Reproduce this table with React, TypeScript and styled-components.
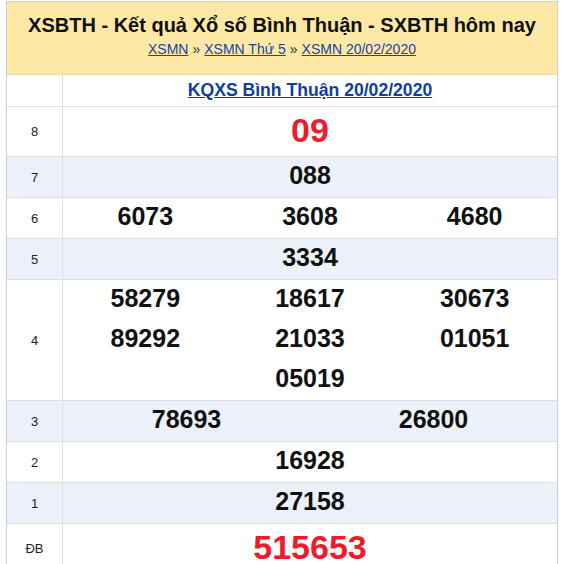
import React from 'react';
import styled, { createGlobalStyle } from 'styled-components';

const GlobalStyle = createGlobalStyle`
  html, body {
    margin: 0;
    padding: 0;
    background: #fff;
    font-family: "Liberation Sans", Arial, sans-serif;
  }
`;

const Box = styled.div`
  margin: 1px 6px 0;
  width: 552px;
  box-sizing: border-box;
  border: 1px solid #cfcfcf;
  border-bottom: none;
  box-shadow: 0 0 1px rgba(0, 0, 0, 0.15);
`;

const Header = styled.div`
  background: #fde9a5;
  height: 73px;
  box-sizing: border-box;
  padding-top: 11px;
  text-align: center;
  border-bottom: 1px solid #e8dcb0;
`;

const Title = styled.h1`
  margin: 0;
  font-size: 20px;
  line-height: 24px;
  font-weight: bold;
  color: #111;
`;

const Crumbs = styled.div`
  margin-top: 4px;
  font-size: 14px;
  line-height: 17px;
  color: #333;
`;

const Crumb = styled.a`
  color: #2340a6;
  text-decoration: underline;
`;

const Sep = styled.span`
  margin: 0 4px;
`;

const Row = styled.div<{ $alt?: boolean; $h: number }>`
  display: flex;
  height: ${p => p.$h}px;
  border-bottom: 1px solid #dcdfe4;
  background: ${p => (p.$alt ? '#ecf0f9' : '#fff')};
`;

const Label = styled.div`
  width: 55px;
  flex-shrink: 0;
  border-right: 1px solid #dcdfe4;
  display: flex;
  align-items: center;
  justify-content: center;
  font-size: 13px;
  color: #222;
`;

const Cell = styled.div<{ $cols: number }>`
  flex: 1;
  display: grid;
  grid-template-columns: repeat(${p => p.$cols}, 1fr);
  grid-auto-rows: 40px;
  align-content: center;
`;

const Num = styled.div<{ $red?: boolean; $big?: boolean; $span?: boolean }>`
  display: flex;
  align-items: center;
  justify-content: center;
  box-sizing: border-box;
  padding-bottom: 3px;
  font-weight: bold;
  font-size: ${p => (p.$big ? 34 : 25)}px;
  color: ${p => (p.$red ? '#ee1b2c' : '#111')};
  ${p => (p.$span ? 'grid-column: 1 / -1;' : '')}
`;

const TableTitle = styled.a`
  font-size: 17.6px;
  font-weight: bold;
  color: #0f3e9e;
  text-decoration: underline;
`;

const TitleCell = styled.div`
  flex: 1;
  display: flex;
  align-items: center;
  justify-content: center;
`;

type Prize = { label: string; nums: string[]; cols: number; h: number; red?: boolean };

const prizes: Prize[] = [
  { label: '8', nums: ['09'], cols: 1, h: 49, red: true },
  { label: '7', nums: ['088'], cols: 1, h: 40 },
  { label: '6', nums: ['6073', '3608', '4680'], cols: 3, h: 40 },
  { label: '5', nums: ['3334'], cols: 1, h: 40 },
  { label: '4', nums: ['58279', '18617', '30673', '89292', '21033', '01051', '05019'], cols: 3, h: 120 },
  { label: '3', nums: ['78693', '26800'], cols: 2, h: 40 },
  { label: '2', nums: ['16928'], cols: 1, h: 40 },
  { label: '1', nums: ['27158'], cols: 1, h: 40 },
  { label: 'ĐB', nums: ['515653'], cols: 1, h: 49, red: true },
];

export default function App() {
  return (
    <>
      <GlobalStyle />
      <Box>
        <Header>
          <Title>XSBTH - Kết quả Xổ số Bình Thuận - SXBTH hôm nay</Title>
          <Crumbs>
            <Crumb href="#">XSMN</Crumb>
            <Sep>»</Sep>
            <Crumb href="#">XSMN Thứ 5</Crumb>
            <Sep>»</Sep>
            <Crumb href="#">XSMN 20/02/2020</Crumb>
          </Crumbs>
        </Header>
        <Row $h={31}>
          <Label />
          <TitleCell>
            <TableTitle href="#">KQXS Bình Thuận 20/02/2020</TableTitle>
          </TitleCell>
        </Row>
        {prizes.map((p, i) => (
          <Row key={p.label} $h={p.h} $alt={i % 2 === 1}>
            <Label>{p.label}</Label>
            <Cell $cols={p.cols}>
              {p.nums.map((n, j) => (
                <Num
                  key={n}
                  $red={p.red}
                  $big={p.red}
                  $span={p.cols === 3 && p.nums.length === 7 && j === 6}
                >
                  {n}
                </Num>
              ))}
            </Cell>
          </Row>
        ))}
      </Box>
    </>
  );
}
